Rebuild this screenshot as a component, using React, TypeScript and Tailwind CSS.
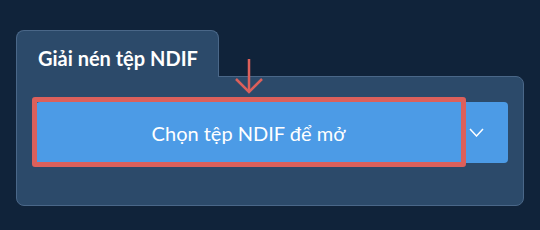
export default function App() {
  return (
    <div className="h-[230px] w-full bg-[#10233a] pl-4 pt-[30px] font-['Lato',sans-serif] text-white">
      <div className="flex w-[508px] flex-col">
        <div className="relative z-10 -mb-px h-[47px] w-[203px] rounded-t-[8px] border border-b-0 border-[#4a6788] bg-[#2c4a6a] pl-[21px] pt-[15px]">
          <h2 className="text-[20px] font-bold leading-[24px]">Giải nén tệp NDIF</h2>
        </div>
        <div className="h-[130px] rounded-tr-[8px] rounded-b-[8px] border border-[#4a6788] bg-[#2c4a6a] pl-[19px] pt-[25px]">
          <div className="flex h-[61px] w-[472px] rounded-[4px] bg-[#4c9be6]">
            <div className="relative flex w-[425px] items-center justify-center">
              <span className="text-[20px] leading-[24px]">Chọn tệp NDIF để mở</span>
              <div className="pointer-events-none absolute -bottom-[4px] -left-[4px] -right-[5px] -top-[5px] rounded-[3px] border-[5px] border-[#dc605b]" />
              <svg
                className="absolute -top-[44px] left-[198px]"
                width="30"
                height="36"
                viewBox="0 0 30 36"
                fill="none"
                stroke="#dc605b"
                strokeWidth="2.5"
              >
                <path d="M15 1 V34" />
                <path d="M2 21 L15 34 L28 21" />
              </svg>
            </div>
            <div className="flex flex-1 items-center pl-[8px]">
              <svg width="15" height="9" viewBox="0 0 15 9" fill="none" stroke="white" strokeWidth="1.5">
                <path d="M1 1 L7.5 8 L14 1" />
              </svg>
            </div>
          </div>
        </div>
      </div>
    </div>
  );
}
